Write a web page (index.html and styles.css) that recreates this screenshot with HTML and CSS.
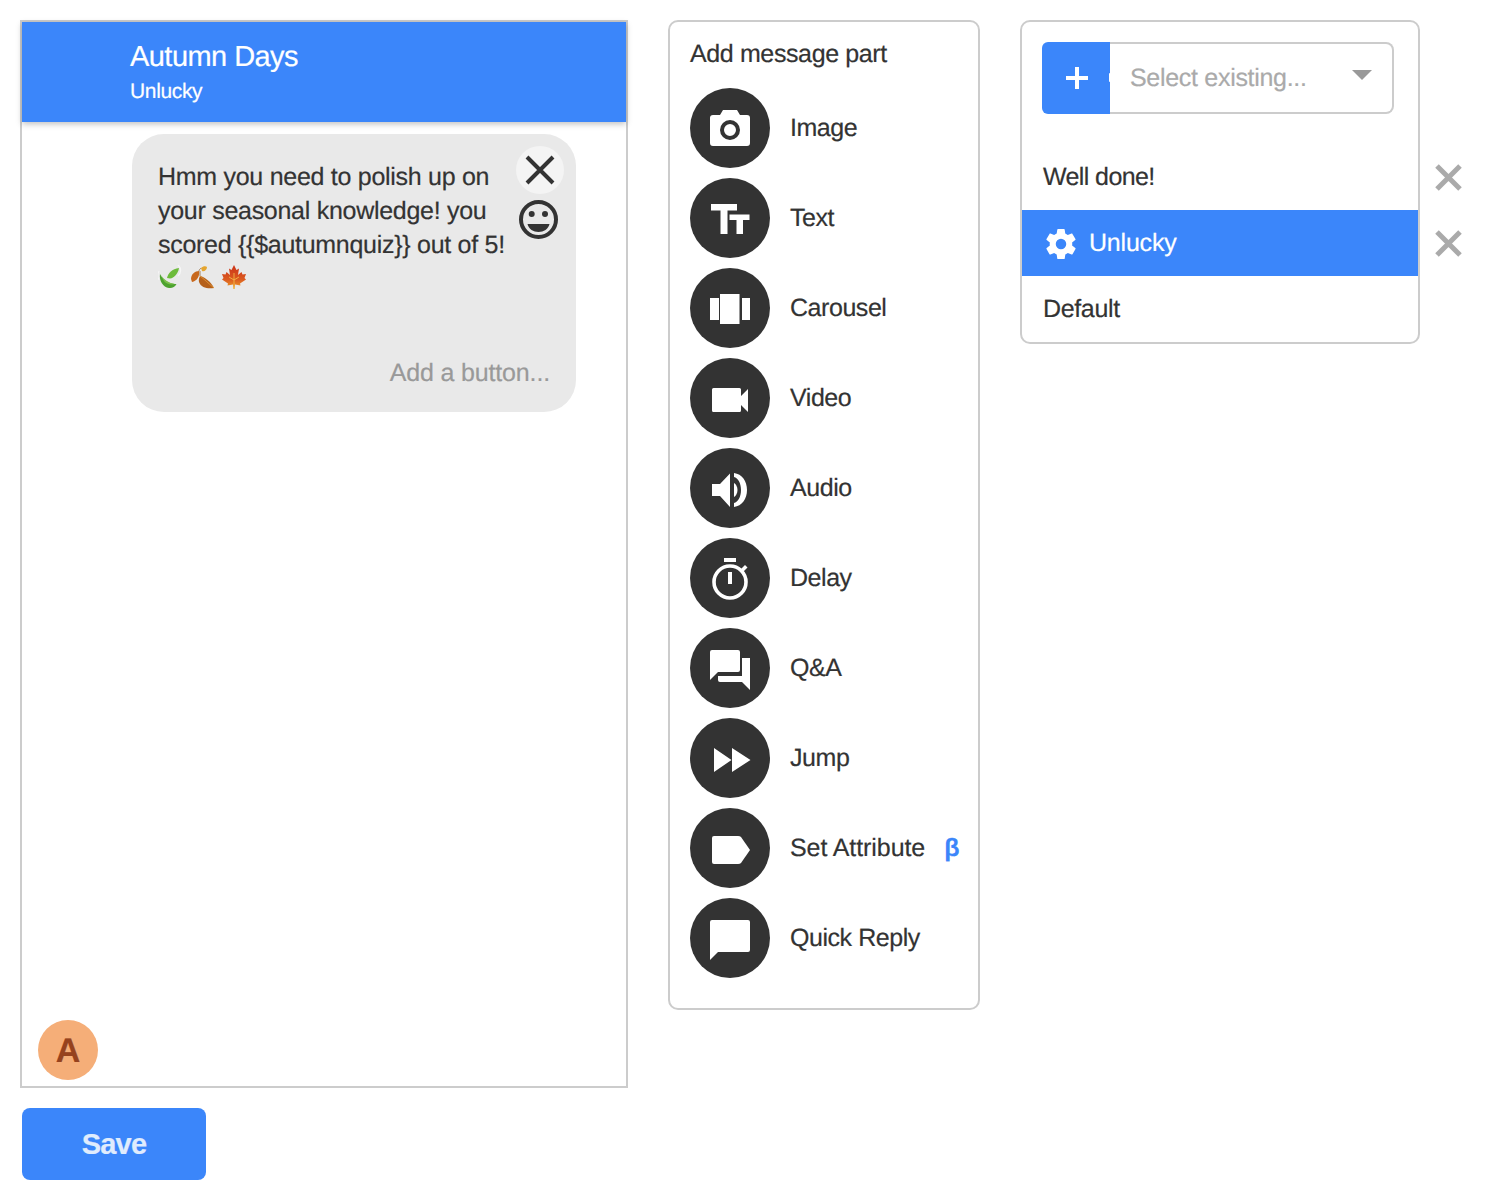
FILE: index.html
```html
<!DOCTYPE html>
<html lang="en">
<head>
<meta charset="utf-8">
<title>Autumn Days</title>
<link rel="stylesheet" href="styles.css">
</head>
<body>
<div class="page">
  <div class="col-left">
    <section class="phone">
      <header class="phone-head">
        <div class="phone-title">Autumn Days</div>
        <div class="phone-sub">Unlucky</div>
      </header>
      <div class="phone-body">
        <div class="bubble">
          <div class="bubble-main">
            <p class="bubble-text">Hmm you need to polish up on your seasonal knowledge! you scored {{$autumnquiz}} out of 5!</p>
            <div class="emoji-row">
              <svg class="emoji" viewBox="0 0 24 24"><path d="M20 0c3.500 3 3.500 8 0 11" fill="none" stroke="#f6f6f6" stroke-width="1.200"/><path d="M2 9C1 16 5 22 11 23c3 .5 6-1 7.500-4C13 19 6 17 2 9z" fill="#4da32f"/><path d="M3 10c3 5 8 8 14 9-4 1-9 0-11-3z" fill="#7cc04a"/><path d="M9 13c1-5 5-9 12-10-1 6-5 10-9 10.500z" fill="#6dbb3b"/><path d="M1 6c-1.500 3-1.500 6 0 9" fill="none" stroke="#f6f6f6" stroke-width="1"/></svg>
              <svg class="emoji" viewBox="0 0 24 24"><path d="M1 14C1 9 5 6 9 6c1 5-2 10-7 11z" fill="#c8681c"/><path d="M10 11c5 1 11 6 14 12-6 1-13 0-15-6-.5-2 0-4 1-6z" fill="#b5601a"/><path d="M10 11c4 3 8 7 14 12" fill="none" stroke="#e39a3a" stroke-width=".8"/><path d="M11 3c2-2 5-2 6-1 0 3-3 5-5 4z" fill="#e5a52e"/><path d="M9 6c0-1 1-2 2-3M10 11V6" fill="none" stroke="#8a5a22" stroke-width=".7"/></svg>
              <svg class="emoji" viewBox="0 0 24 24"><defs><linearGradient id="maple" x1="0" y1="0" x2="0" y2="1"><stop offset="0" stop-color="#cb3218"/><stop offset=".6" stop-color="#db5a20"/><stop offset="1" stop-color="#eda22c"/></linearGradient></defs><path d="M12 0l2.500 5L17 3.500 16 10l3.500-3 1 2.500L24 9l-1.500 4 1.500 1.500-6 4 .5 2-5.500-1-.5 4.500h-1L11 19.500l-5.500 1 .5-2-6-4L1.500 13 0 9l3.500.5 1-2.500L8 10 7 3.500 9.500 5z" fill="url(#maple)"/><path d="M12 8v16M12 15l5-3M12 15l-5-3" fill="none" stroke="#f5c04a" stroke-width=".8"/></svg>
            </div>
          </div>
          <button class="bubble-close" aria-label="Close">
            <svg viewBox="0 0 48 48"><path d="M11 11L37 37M37 11L11 37" stroke="#333" stroke-width="4" fill="none"/></svg>
          </button>
          <svg class="smiley" viewBox="0 0 40 40"><circle cx="20.500" cy="19.500" r="17.500" fill="none" stroke="#333" stroke-width="4"/><circle cx="13.700" cy="14" r="3" fill="#333"/><circle cx="27" cy="14" r="3" fill="#333"/><path d="M9.500 24h22c-1 5-6 8-11 8s-10-3-11-8z" fill="#333"/></svg>
          <div class="add-button">Add a button...</div>
        </div>
        <div class="avatar">A</div>
      </div>
    </section>
    <button class="save">Save</button>
  </div>

  <aside class="parts card">
    <h2 class="parts-title">Add message part</h2>
    <ul class="parts-list">
      <li class="part"><span class="part-icon"><svg viewBox="0 0 80 80"><path d="M20 30q0-3 3-3h7l3-5h14l3 5h7q3 0 3 3v25q0 3-3 3H23q-3 0-3-3z" fill="#fff"/><circle cx="40" cy="42" r="8" fill="#fff" stroke="#333" stroke-width="4"/></svg></span><span class="part-label">Image</span></li>
      <li class="part"><span class="part-icon"><svg viewBox="0 0 80 80"><path d="M21 26h26v6.500H37.500V56h-7V32.500H21zM39.500 36.500h20v5.500H53v14h-6.500V42h-7z" fill="#fff"/></svg></span><span class="part-label">Text</span></li>
      <li class="part"><span class="part-icon"><svg viewBox="0 0 80 80"><path d="M20 30h9v22h-9zM30 26h19.500v30H30zM52 30h8v22h-8z" fill="#fff"/></svg></span><span class="part-label">Carousel</span></li>
      <li class="part"><span class="part-icon"><svg viewBox="0 0 80 80"><path d="M22 31.500q0-1.500 1.500-1.500h26q1.500 0 1.500 1.500V38l7-7v23l-7-7v5.500q0 1.500-1.500 1.500h-26q-1.500 0-1.500-1.500z" fill="#fff"/></svg></span><span class="part-label">Video</span></li>
      <li class="part"><span class="part-icon"><svg viewBox="0 0 80 80"><path d="M22 36h8l10-10.500V59L30 48h-8z" fill="#fff"/><path d="M44 25c8 1 13 8 13 17s-5 16-13 17v-4c4-1 7-6 7-13s-3-12-7-13z" fill="#fff"/><path d="M44 35c2 1 3.500 4 3.500 7s-1.500 6-3.500 7z" fill="#fff"/></svg></span><span class="part-label">Audio</span></li>
      <li class="part"><span class="part-icon"><svg viewBox="0 0 80 80"><path d="M34 20h12v4H34z" fill="#fff"/><circle cx="40" cy="44" r="16" fill="none" stroke="#fff" stroke-width="3.600"/><path d="M38 34h4v12h-4z" fill="#fff"/><path d="M51 31l4-4 2.500 2.500-4 4z" fill="#fff"/></svg></span><span class="part-label">Delay</span></li>
      <li class="part"><span class="part-icon"><svg viewBox="0 0 80 80"><path d="M20 24q0-2 2-2h26q2 0 2 2v18q0 2-2 2H28l-8 8z" fill="#fff"/><path d="M52 30h8v32l-8-8H30q-2 0-2-2v-4h24z" fill="#fff"/></svg></span><span class="part-label">Q&amp;A</span></li>
      <li class="part"><span class="part-icon"><svg viewBox="0 0 80 80"><path d="M24 30l17.500 12L24 54zM42 30l18.500 12L42 54z" fill="#fff"/></svg></span><span class="part-label">Jump</span></li>
      <li class="part"><span class="part-icon"><svg viewBox="0 0 80 80"><path d="M22 30q0-2 2-2h24q2 0 3 1l9 13-9 13q-1 1-3 1H24q-2 0-2-2z" fill="#fff"/></svg></span><span class="part-label part-label-wide">Set Attribute</span><span class="beta">β</span></li>
      <li class="part"><span class="part-icon"><svg viewBox="0 0 80 80"><path d="M20 24q0-2 2-2h36q2 0 2 2v28q0 2-2 2H28l-8 8z" fill="#fff"/></svg></span><span class="part-label">Quick Reply</span></li>
    </ul>
  </aside>

  <div class="col-right">
    <section class="variants card">
      <div class="picker">
        <button class="picker-add" aria-label="Add">
          <svg viewBox="0 0 24 24"><path d="M12 1v22M1 12h22" stroke="#fff" stroke-width="4"/></svg>
        </button>
        <div class="picker-field">
          <span>Select existing...</span>
          <span class="caret"></span>
        </div>
      </div>
      <ul class="variant-list">
        <li class="variant variant-tight">Well done!</li>
        <li class="variant active">
          <svg class="gear" viewBox="0 0 24 24"><path fill-rule="evenodd" d="M19.400 13c.05-.33.1-.66.100-1s-.05-.67-.1-1l2.100-1.650c.2-.15.25-.42.120-.64l-2-3.460c-.12-.22-.39-.3-.61-.22l-2.490 1c-.52-.4-1.080-.73-1.690-.98l-.38-2.650A.49.490 0 0 0 14 2h-4c-.25 0-.46.180-.49.420l-.38 2.650c-.61.250-1.170.590-1.690.980l-2.490-1c-.23-.09-.49 0-.61.220l-2 3.460c-.13.220-.07.490.12.640L4.570 11c-.05.330-.1.670-.1 1s.05.670.1 1l-2.110 1.650c-.19.150-.24.420-.12.640l2 3.460c.12.220.39.300.61.220l2.490-1c.52.400 1.080.730 1.690.980l.38 2.650c.03.240.24.420.49.420h4c.25 0 .46-.18.49-.42l.38-2.650c.61-.25 1.170-.59 1.690-.98l2.490 1c.23.090.49 0 .61-.22l2-3.460c.12-.22.070-.49-.12-.64L19.400 13zM12 15.500a3.500 3.500 0 1 1 0-7 3.500 3.500 0 0 1 0 7z" fill="#fff"/></svg>
          <span>Unlucky</span>
        </li>
        <li class="variant">Default</li>
      </ul>
      <svg class="remove remove-first" viewBox="0 0 29 29"><path d="M3 3l23 23M26 3L3 26" stroke="#aaa" stroke-width="5"/></svg>
      <svg class="remove remove-second" viewBox="0 0 29 29"><path d="M3 3l23 23M26 3L3 26" stroke="#aaa" stroke-width="5"/></svg>
    </section>
  </div>
</div>
</body>
</html>
```

FILE: styles.css
```css
* { box-sizing: border-box; }
html, body { margin: 0; padding: 0; background: #fff; }
body {
  font-family: "Liberation Sans", Arial, sans-serif;
  color: #333;
  font-size: 25px;
  text-rendering: geometricPrecision;
  -webkit-text-stroke: .2px currentColor;
}
ul { list-style: none; margin: 0; padding: 0; }
button { font-family: inherit; border: 0; padding: 0; cursor: pointer; }

.page { display: flex; align-items: flex-start; gap: 40px; padding: 20px 0 0 20px; }

.col-left { width: 608px; display: flex; flex-direction: column; }
.phone {
  height: 1068px;
  border: 2px solid #ccc;
  display: flex;
  flex-direction: column;
}
.phone-head {
  height: 100px;
  background: #3b86fa;
  color: #fff;
  padding: 18px 0 0 108px;
  box-shadow: 0 2px 6px rgba(0, 0, 0, .25);
  position: relative;
}
.phone-title { font-size: 29px; line-height: 34px; letter-spacing: -.55px; }
.phone-sub { font-size: 21px; line-height: 34px; margin-top: 1px; letter-spacing: -.35px; }
.phone-body { flex: 1; position: relative; padding: 12px 0 0 110px; }

.bubble {
  width: 444px;
  height: 278px;
  border-radius: 32px;
  background: #e9e9e9;
  position: relative;
  padding: 26px 0 0 26px;
}
.bubble-main { width: 350px; }
.bubble-text { margin: 0; line-height: 34px; letter-spacing: -.28px; }
.emoji-row { display: flex; gap: 8px; margin-top: 2px; height: 26px; align-items: center; }
.emoji { width: 24px; height: 24px; }
.bubble-close {
  position: absolute;
  top: 12px;
  right: 12px;
  width: 48px;
  height: 48px;
  border-radius: 50%;
  background: #f4f4f4;
  display: flex;
}
.bubble-close svg { width: 48px; height: 48px; }
.smiley { position: absolute; top: 66px; right: 18px; width: 40px; height: 40px; }
.add-button {
  position: absolute;
  right: 26px;
  bottom: 22px;
  color: #999;
  line-height: 34px;
  letter-spacing: -.15px;
}
.avatar {
  position: absolute;
  left: 16px;
  bottom: 6px;
  width: 60px;
  height: 60px;
  padding-top: 2px;
  border-radius: 50%;
  background: #f5ae78;
  color: #96421d;
  font-weight: 700;
  font-size: 34px;
  display: flex;
  align-items: center;
  justify-content: center;
}
.save {
  width: 184px;
  height: 72px;
  margin: 20px 0 0 2px;
  border-radius: 8px;
  background: #3b86fa;
  color: #e0ecfd;
  font-size: 29px;
  font-weight: 700;
  letter-spacing: -.8px;
}

.card { border: 2px solid #ccc; border-radius: 10px; background: #fff; }

.parts { width: 312px; height: 990px; padding: 15px 0 0 20px; }
.parts-title { margin: 0; font-size: 25px; font-weight: 400; line-height: 34px; letter-spacing: -.38px; }
.parts-list { display: flex; flex-direction: column; gap: 10px; margin-top: 17px; }
.part { display: flex; align-items: center; height: 80px; letter-spacing: -.45px; }
.part-icon {
  width: 80px;
  height: 80px;
  border-radius: 50%;
  background: #333;
  margin-right: 20px;
  flex: none;
}
.part-icon svg { display: block; width: 80px; height: 80px; }
.part-label-wide { letter-spacing: -.08px; }
.beta { color: #3b86fa; font-weight: 700; margin-left: 19px; }

.col-right { width: 400px; }
.variants { height: 324px; position: relative; padding-top: 20px; }
.picker { display: flex; width: 352px; height: 72px; margin-left: 20px; }
.picker-add {
  width: 68px;
  background: #3b86fa;
  border-radius: 6px 0 0 6px;
  display: flex;
  align-items: center;
  justify-content: center;
  padding-left: 1px;
  position: relative;
}
.picker-add::after {
  content: "";
  position: absolute;
  right: 0;
  top: 31px;
  width: 1.5px;
  height: 9px;
  background: #fff;
  border-radius: 2px 0 0 2px;
}
.picker-add svg { width: 24px; height: 24px; }
.picker-field {
  flex: 1;
  border: 2px solid #ccc;
  border-left: 0;
  border-radius: 0 8px 8px 0;
  color: #aaa;
  display: flex;
  align-items: center;
  justify-content: space-between;
  padding: 0 20px;
  letter-spacing: -.3px;
}
.caret {
  width: 0;
  height: 0;
  border-left: 10px solid transparent;
  border-right: 10px solid transparent;
  border-top: 10px solid #999;
  margin: -6px 0 0;
}
.variant-list { margin-top: 30px; }
.variant {
  height: 66px;
  display: flex;
  align-items: center;
  padding-left: 21px;
  color: #333;
  letter-spacing: -.35px;
}
.variant-tight { letter-spacing: -.6px; }
.variant.active { background: #3b86fa; color: #fff; gap: 10px; letter-spacing: -.2px; }
.gear { width: 36px; height: 36px; margin-top: 2px; }
.remove { position: absolute; left: 412px; width: 29px; height: 29px; }
.remove-first { top: 141px; }
.remove-second { top: 207px; }
```
